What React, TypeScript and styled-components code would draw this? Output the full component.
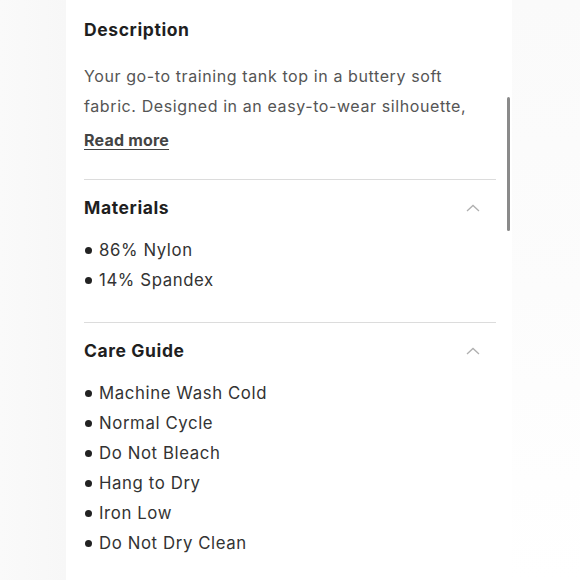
import React from "react";
import styled, { createGlobalStyle } from "styled-components";

const Global = createGlobalStyle`
  html, body { margin: 0; padding: 0; background: #ffffff; }
  body { font-family: Inter, "Liberation Sans", Arial, sans-serif; -webkit-font-smoothing: antialiased; }
`;

const Page = styled.div`
  display: flex;
  width: 580px;
  height: 580px;
  overflow: hidden;
`;

const LeftGutter = styled.div`
  width: 66px;
  flex: none;
  background: linear-gradient(90deg, #fafafa 0%, #f7f7f7 100%);
`;

const RightGutter = styled.div`
  flex: 1;
  background: linear-gradient(180deg, #fafafa 0%, #fcfcfc 50%, #ffffff 100%);
`;

const Panel = styled.div`
  position: relative;
  width: 446px;
  flex: none;
  background: #ffffff;
  padding: 18px 16px 0 18px;
  box-sizing: border-box;
`;

const Scrollbar = styled.div`
  position: absolute;
  right: 2px;
  top: 97px;
  width: 3px;
  height: 134px;
  border-radius: 2px;
  background: #8a8a8a;
`;

const Section = styled.section<{ $first?: boolean; $last?: boolean }>`
  padding-top: ${(p) => (p.$first ? "0" : "16px")};
  padding-bottom: 27px;
  border-bottom: ${(p) => (p.$last ? "none" : "1px solid #dcdcdc")};
`;

const Header = styled.div`
  display: flex;
  align-items: center;
  justify-content: space-between;
  height: 24px;
  padding-right: 16px;
`;

const Title = styled.h2`
  margin: 0;
  font-size: 17.5px;
  font-weight: 700;
  letter-spacing: 0.6px;
  color: #1f1f1f;
  line-height: 24px;
`;

const Body = styled.p`
  margin: 19px 0 0 0;
  font-size: 16px;
  line-height: 30px;
  letter-spacing: 0.6px;
  color: #555555;
`;

const ReadMore = styled.a`
  display: inline-block;
  margin-top: 7px;
  font-size: 16px;
  font-weight: 700;
  line-height: 24px;
  color: #444444;
  text-decoration: underline;
  text-underline-offset: 3px;
  text-decoration-thickness: 1px;
  letter-spacing: 0.2px;
`;

const List = styled.ul`
  list-style: none;
  margin: 15px 0 0 0;
  padding: 0;
`;

const Item = styled.li`
  display: flex;
  align-items: center;
  font-size: 16.8px;
  line-height: 30px;
  letter-spacing: 0.6px;
  color: #333333;
`;

const Dot = styled.span`
  width: 7px;
  height: 7px;
  border-radius: 50%;
  background: #222222;
  margin: 0 7px 0 1px;
  flex: none;
`;

const Chevron = () => (
  <svg width="14" height="8" viewBox="0 0 14 8" fill="none">
    <polyline points="1,7 7,1.5 13,7" stroke="#b0b0b0" strokeWidth="1.3" />
  </svg>
);

const materials = ["86% Nylon", "14% Spandex"];
const care = [
  "Machine Wash Cold",
  "Normal Cycle",
  "Do Not Bleach",
  "Hang to Dry",
  "Iron Low",
  "Do Not Dry Clean",
];

export default function App() {
  return (
    <>
      <Global />
      <Page>
        <LeftGutter />
        <Panel>
          <Scrollbar />
          <Section $first>
            <Header>
              <Title>Description</Title>
            </Header>
            <Body>
              Your go-to training tank top in a buttery soft
              <br />
              fabric. Designed in an easy-to-wear silhouette,
            </Body>
            <ReadMore>Read more</ReadMore>
          </Section>
          <Section>
            <Header>
              <Title>Materials</Title>
              <Chevron />
            </Header>
            <List>
              {materials.map((m) => (
                <Item key={m}>
                  <Dot />
                  {m}
                </Item>
              ))}
            </List>
          </Section>
          <Section $last>
            <Header>
              <Title>Care Guide</Title>
              <Chevron />
            </Header>
            <List>
              {care.map((m) => (
                <Item key={m}>
                  <Dot />
                  {m}
                </Item>
              ))}
            </List>
          </Section>
        </Panel>
        <RightGutter />
      </Page>
    </>
  );
}
